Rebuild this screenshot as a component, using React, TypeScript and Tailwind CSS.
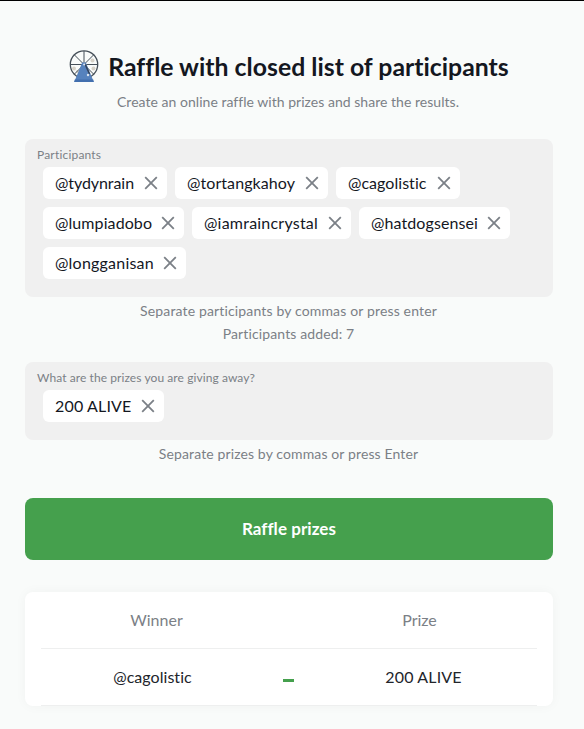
import { useState } from 'react';
import clsx from 'clsx';

interface Tag {
  label: string;
  tracking: string;
  width: string;
}

const PARTICIPANTS: Tag[] = [
  { label: '@tydynrain', tracking: 'tracking-[-0.07px]', width: 'w-[124px]' },
  { label: '@tortangkahoy', tracking: 'tracking-[0.08px]', width: 'w-[153px]' },
  { label: '@cagolistic', tracking: 'tracking-[0.04px]', width: 'w-[124px]' },
  { label: '@lumpiadobo', tracking: 'tracking-[0.09px]', width: 'w-[141px]' },
  { label: '@iamraincrystal', tracking: 'tracking-[0.22px]', width: 'w-[159px]' },
  { label: '@hatdogsensei', tracking: 'tracking-[0.1px]', width: 'w-[151px]' },
  { label: '@longganisan', tracking: 'tracking-[0.22px]', width: 'w-[143px]' },
];

const PRIZES: Tag[] = [
  { label: '200 ALIVE', tracking: 'tracking-[0.16px]', width: 'w-[121px]' },
];

function WheelIcon() {
  return (
    <svg className="h-8 w-[30px] shrink-0" viewBox="0 0 30 32" fill="none">
      <g fill="#d6d2c8">
        <circle cx="23.5" cy="10.5" r="2" />
        <circle cx="5" cy="18.5" r="2" />
        <circle cx="8.5" cy="21.5" r="1.5" />
        <circle cx="24.5" cy="18.5" r="2" />
      </g>
      <g stroke="#454f58">
        <circle cx="15" cy="14.5" r="13.7" strokeWidth="1.3" />
        <path d="M15 1v13.5M1.3 14.5h27.4M5.3 4.8 24.7 24.2M24.7 4.8 5.3 24.2" strokeWidth="1" />
      </g>
      <path d="M13.2 12.5h3.6L24 30H6z" fill="#5682bd" />
      <path d="M5.8 29.5h18.4l.8 2.5H5z" fill="#426fae" />
      <path d="m16 14 4.5 10" stroke="#344258" strokeWidth="1.5" />
      <circle cx="15.2" cy="14.5" r="1.1" fill="#dce5ef" />
      <circle cx="19" cy="25" r="1.2" fill="#dce5ef" />
    </svg>
  );
}

interface TagFieldProps {
  label: string;
  labelTracking: string;
  tags: Tag[];
  onRemove: (label: string) => void;
  className?: string;
}

function TagField({ label, labelTracking, tags, onRemove, className }: TagFieldProps) {
  return (
    <div className={clsx('rounded-lg bg-[#f0f0f0] px-3 pt-2', className)}>
      <div className={clsx('h-5 text-xs leading-4 text-[#7b8086]', labelTracking)}>{label}</div>
      <div className="flex flex-wrap gap-2 pl-1.5">
        {tags.map((tag) => (
          <span
            key={tag.label}
            className={clsx(
              'flex h-8 items-center justify-between rounded-md bg-white pr-[9px] pl-3 whitespace-nowrap text-[#14171f]',
              tag.width,
              tag.tracking,
            )}
          >
            {tag.label}
            <button type="button" aria-label="Remove" onClick={() => onRemove(tag.label)}>
              <svg className="size-3.5" viewBox="0 0 14 14" fill="none">
                <path d="m1.2 1.2 11.6 11.6M12.8 1.2 1.2 12.8" stroke="#7b8087" strokeWidth="1.8" />
              </svg>
            </button>
          </span>
        ))}
      </div>
    </div>
  );
}

export default function App() {
  const [participants, setParticipants] = useState(PARTICIPANTS);
  const [prizes, setPrizes] = useState(PRIZES);

  return (
    <div className="h-[729px] overflow-hidden border-t border-black bg-[#f9fbfa] pr-[31px] pl-[25px] font-['Lato',sans-serif] text-base">
      {/* Heading */}
      <header className="flex flex-col items-center pt-[49px]">
        <div className="flex h-8 items-center gap-[9px]">
          <WheelIcon />
          <h1 className="pt-0.5 text-[24.8px] leading-8 font-bold tracking-[0.01px] whitespace-nowrap text-[#14171f]">
            Raffle with closed list of participants
          </h1>
        </div>
        <p className="mt-2.5 mr-0.5 text-sm leading-5 tracking-[0.03px] text-[#7b8086]">
          Create an online raffle with prizes and share the results.
        </p>
      </header>

      {/* Participants */}
      <TagField
        label="Participants"
        labelTracking="tracking-[0.19px]"
        tags={participants}
        onRemove={(label) => setParticipants(participants.filter((t) => t.label !== label))}
        className="mt-[27px] h-[158px]"
      />
      <div className="mt-0.5 pr-px text-center text-sm leading-[23px] text-[#7b8086]">
        <p className="tracking-[0.15px]">Separate participants by commas or press enter</p>
        <p className="tracking-[0.13px]">Participants added: {participants.length}</p>
      </div>

      {/* Prizes */}
      <TagField
        label="What are the prizes you are giving away?"
        labelTracking="tracking-[0.08px]"
        tags={prizes}
        onRemove={(label) => setPrizes(prizes.filter((t) => t.label !== label))}
        className="mt-[17px] h-[78px]"
      />
      <p className="mt-0.5 pr-px text-center text-sm leading-[23px] tracking-[0.12px] text-[#7b8086]">
        Separate prizes by commas or press Enter
      </p>

      <button
        type="button"
        className="mt-[33px] flex h-[62px] w-full items-center justify-center rounded-lg bg-[#45a04d] text-[17px] font-bold tracking-[0.05px] text-white"
      >
        Raffle prizes
      </button>

      {/* Results */}
      <section className="mt-8 h-[114px] rounded-lg bg-white px-4 text-center shadow-[0_0_12px_rgba(0,0,0,0.04)]">
        <div className="grid h-[57px] grid-cols-[231px_32px_231px] items-center border-b border-[#eeefef] text-[#7b8086]">
          <span>Winner</span>
          <span />
          <span>Prize</span>
        </div>
        <div className="grid h-[57px] grid-cols-[223px_48px_223px] items-center border-b border-[#eeefef] text-[#22252b]">
          <span className="tracking-[0.04px]">@cagolistic</span>
          <span className="mx-auto mt-1.5 h-[3px] w-[11px] bg-[#45a04d]" />
          <span className="tracking-[0.16px]">200 ALIVE</span>
        </div>
      </section>
    </div>
  );
}
